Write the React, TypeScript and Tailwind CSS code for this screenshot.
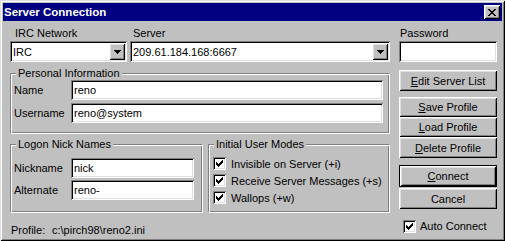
import React from 'react';

const font = { fontFamily: '"Liberation Sans", Arial, sans-serif' };

const sunken = "bg-white shadow-[inset_1px_1px_0_#808080,inset_-1px_-1px_0_#fff,inset_2px_2px_0_#000,inset_-2px_-2px_0_#dfdfdf]";
const raised = "bg-[#c0c0c0] shadow-[inset_1px_1px_0_#fff,inset_-1px_-1px_0_#000,inset_2px_2px_0_#dfdfdf,inset_-2px_-2px_0_#808080]";
const groupCls = "relative border border-t-[#808080] border-l-[#808080] border-r-white border-b-white shadow-[inset_1px_1px_0_#fff,inset_-1px_-1px_0_#808080]";

function Field({ value, className = "" }: { value: string; className?: string }) {
  return <div className={`${sunken} flex items-center pl-[3px] h-[20px] text-[11px] ${className}`}>{value}</div>;
}

function Combo({ value }: { value: string }) {
  return (
    <div className={`${sunken} flex items-center h-[21px] pl-[3px] pr-[2px]`}>
      <span className="flex-1">{value}</span>
      <div className={`${raised} w-[16px] h-[17px] flex items-center justify-center`}>
        <svg width="7" height="4" viewBox="0 0 7 4" shapeRendering="crispEdges"><path d="M0 0h7v1H0zM1 1h5v1H1zM2 2h3v1H2zM3 3h1v1H3z" fill="#000" /></svg>
      </div>
    </div>
  );
}

function Check() {
  return (
    <div className={`${sunken} w-[13px] h-[13px] shrink-0`}>
      <svg width="13" height="13" viewBox="0 0 13 13" shapeRendering="crispEdges">
        <path d="M3 5h1v3H3zM4 6h1v3H4zM5 7h1v3H5zM6 6h1v3H6zM7 5h1v3H7zM8 4h1v3H8zM9 3h1v3H9z" fill="#000" />
      </svg>
    </div>
  );
}

function Btn({ children, h = "h-[20px]", def = false }: { children: React.ReactNode; h?: string; def?: boolean }) {
  const cls = def
    ? "bg-[#c0c0c0] shadow-[inset_1px_1px_0_#000,inset_-1px_-1px_0_#000,inset_2px_2px_0_#fff,inset_-2px_-2px_0_#000,inset_3px_3px_0_#dfdfdf,inset_-3px_-3px_0_#808080]"
    : raised;
  return <div className={`${cls} ${h} w-full flex items-center justify-center`}>{children}</div>;
}

function Group({ title, className = "", children }: { title: string; className?: string; children: React.ReactNode }) {
  return (
    <div className={`${groupCls} ${className}`}>
      <span className="absolute left-[5px] top-[-8px] px-[2px] leading-[14px] bg-[#c0c0c0]">{title}</span>
      {children}
    </div>
  );
}

export default function App() {
  return (
    <div style={font} className="w-[505px] h-[241px] bg-[#c0c0c0] p-[3px] text-[11px] leading-[14px] text-black shadow-[inset_1px_1px_0_#dfdfdf,inset_-1px_-1px_0_#000,inset_2px_2px_0_#fff,inset_-2px_-2px_0_#808080]">
      <div className="h-[18px] bg-[#000080] flex items-center pl-[1px] pr-[2px]">
        <span className="flex-1 text-white font-bold text-[11.5px]">Server Connection</span>
        <div className={`${raised} w-[16px] h-[14px] flex items-center justify-center`}>
          <svg width="8" height="7" viewBox="0 0 8 7" shapeRendering="crispEdges">
            <path d="M0 0h2v1H0zM6 0h2v1H6zM1 1h2v1H1zM5 1h2v1H5zM2 2h4v1H2zM3 3h2v1H3zM2 4h4v1H2zM1 5h2v1H1zM5 5h2v1H5zM0 6h2v1H0zM6 6h2v1H6z" fill="#000" />
          </svg>
        </div>
      </div>

      <div className="flex gap-[9px] pl-[7px] pt-[5px]">
        <div className="w-[380px] flex flex-col">
          <div className="flex gap-[3px]">
            <div className="w-[117px]">
              <div className="pl-[5px] mb-[1px]">IRC Network</div>
              <Combo value="IRC" />
            </div>
            <div className="flex-1">
              <div className="pl-[3px] mb-[1px]">Server</div>
              <Combo value="209.61.184.168:6667" />
            </div>
          </div>

          <Group title="Personal Information" className="mt-[11px] h-[61px] pt-[6px] pl-[3px] pr-[6px] flex flex-col gap-[3px]">
            <div className="flex items-center">
              <span className="w-[57px]">Name</span>
              <Field value="reno" className="flex-1" />
            </div>
            <div className="flex items-center">
              <span className="w-[57px]">Username</span>
              <Field value="reno@system" className="flex-1" />
            </div>
          </Group>

          <div className="flex gap-[5px] mt-[10px]">
            <Group title="Logon Nick Names" className="w-[193px] h-[69px] pt-[13px] pl-[3px] pr-[8px] flex flex-col gap-[2px]">
              <div className="flex items-center">
                <span className="w-[57px]">Nickname</span>
                <Field value="nick" className="flex-1" />
              </div>
              <div className="flex items-center">
                <span className="w-[57px]">Alternate</span>
                <Field value="reno-" className="flex-1" />
              </div>
            </Group>
            <Group title="Initial User Modes" className="flex-1 h-[69px] pt-[10px] pl-[4px] flex flex-col">
              {["Invisible on Server (+i)", "Receive Server Messages (+s)", "Wallops (+w)"].map(t => (
                <div key={t} className="h-[17px] flex items-center gap-[5px]">
                  <Check />
                  <span>{t}</span>
                </div>
              ))}
            </Group>
          </div>

          <div className="mt-[10px] pl-[1px] flex">
            <span className="w-[41px]">Profile:</span>
            <span>c:\pirch98\reno2.ini</span>
          </div>
        </div>

        <div className="w-[98px] flex flex-col">
          <div className="pl-[1px] mb-[1px]">Password</div>
          <Field value="" className="h-[21px]" />
          <div className="mt-[8px]"><Btn h="h-[21px]"><span><u>E</u>dit Server List</span></Btn></div>
          <div className="mt-[6px]"><Btn><span><u>S</u>ave Profile</span></Btn></div>
          <Btn><span><u>L</u>oad Profile</span></Btn>
          <Btn h="h-[21px]"><span><u>D</u>elete Profile</span></Btn>
          <div className="mt-[7px]"><Btn h="h-[22px]" def><span><u>C</u>onnect</span></Btn></div>
          <div className="mt-[1px]"><Btn h="h-[21px]"><span>Cancel</span></Btn></div>
          <div className="mt-[10px] pl-[4px] flex items-center gap-[4px]">
            <Check />
            <span>Auto Connect</span>
          </div>
        </div>
      </div>
    </div>
  );
}
